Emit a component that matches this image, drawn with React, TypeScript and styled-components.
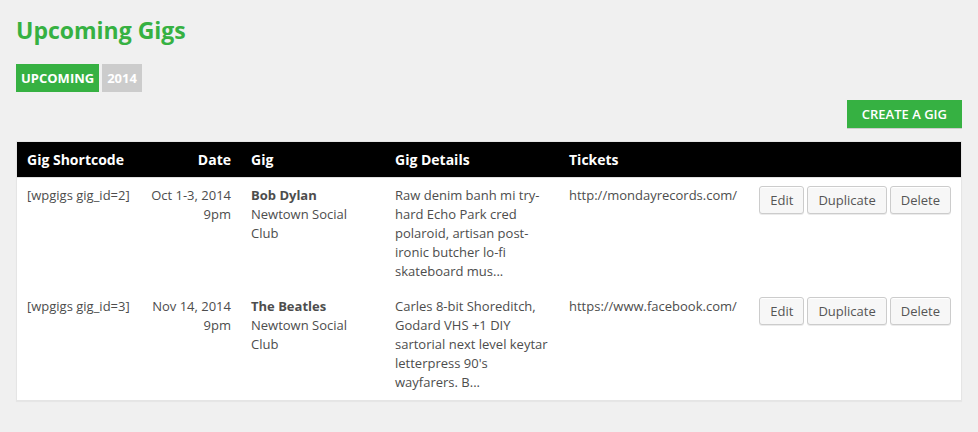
import React from "react";
import styled, { createGlobalStyle } from "styled-components";

const GlobalStyle = createGlobalStyle`
  body {
    margin: 0;
    background: #f0f0f0;
    color: #4d4d4d;
    font: 13px/19px "Open Sans", sans-serif;
  }
`;

const Page = styled.main`
  padding: 15px 16px 30px;
`;

const Title = styled.h1`
  margin: 0 0 19px;
  color: #36b142;
  font-size: 23px;
  line-height: 30px;
  font-weight: 700;
`;

const Filters = styled.nav`
  display: flex;
  gap: 3px;
`;

const FilterLink = styled.a<{ $active?: boolean }>`
  padding: 0 5px;
  background: ${(p) => (p.$active ? "#36b142" : "#ccc")};
  color: #fff;
  font-weight: 700;
  line-height: 28px;
  text-decoration: none;
  text-transform: uppercase;
`;

const Actions = styled.div`
  display: flex;
  justify-content: flex-end;
  margin: 8px 0 13px;
`;

const CreateButton = styled.button`
  height: 28px;
  padding: 0 15px;
  border: 0;
  background: #36b142;
  box-shadow: 0 1px 0 #ccc;
  color: #fff;
  font: 600 13px/28px "Open Sans", sans-serif;
  text-transform: uppercase;
`;

const GigTable = styled.table`
  width: 100%;
  table-layout: fixed;
  border: 1px solid #e5e5e5;
  border-spacing: 0;
  background: #fff;
  box-shadow: 0 1px 1px rgba(0, 0, 0, 0.04);
`;

const HeadCell = styled.th<{ $align?: "right" }>`
  padding: 8px 10px;
  border-bottom: 1px solid #e1e1e1;
  background: #000;
  color: #fff;
  font-size: 14px;
  font-weight: 700;
  text-align: ${(p) => p.$align ?? "left"};
`;

const Cell = styled.td<{ $align?: "right" }>`
  padding: 8px 10px;
  vertical-align: top;
  text-align: ${(p) => p.$align ?? "left"};
  white-space: ${(p) => (p.$align ? "nowrap" : "normal")};
`;

const ActionCell = styled(Cell)`
  white-space: nowrap;
`;

const GigName = styled.strong`
  display: block;
  font-weight: 700;
`;

const RowButtons = styled.div`
  display: flex;
  justify-content: flex-end;
  gap: 3px;
`;

const RowButton = styled.button`
  height: 28px;
  padding: 0 10px;
  border: 1px solid #ccc;
  border-radius: 3px;
  background: #f7f7f7;
  box-shadow: inset 0 1px 0 #fff, 0 1px 0 rgba(0, 0, 0, 0.08);
  color: #555;
  font: 13px/26px "Open Sans", sans-serif;
`;

const gigs = [
  {
    id: 2,
    date: "Oct 1-3, 2014",
    name: "Bob Dylan",
    details:
      "Raw denim banh mi try-hard Echo Park cred polaroid, artisan post-ironic butcher lo-fi skateboard mus...",
    tickets: "http://mondayrecords.com/",
  },
  {
    id: 3,
    date: "Nov 14, 2014",
    name: "The Beatles",
    details:
      "Carles 8-bit Shoreditch, Godard VHS +1 DIY sartorial next level keytar letterpress 90's wayfarers. B...",
    tickets: "https://www.facebook.com/",
  },
];

export default function App() {
  return (
    <>
      <GlobalStyle />
      <Page>
        <Title>Upcoming Gigs</Title>
        <Filters aria-label="Gig filters">
          <FilterLink href="#upcoming" $active>Upcoming</FilterLink>
          <FilterLink href="#2014">2014</FilterLink>
        </Filters>
        <Actions>
          <CreateButton type="button">Create a Gig</CreateButton>
        </Actions>
        <GigTable>
          <colgroup>
            <col width="124" />
            <col width="100" />
            <col width="144" />
            <col width="174" />
            <col width="188" />
            <col />
          </colgroup>
          <thead>
            <tr>
              <HeadCell scope="col">Gig Shortcode</HeadCell>
              <HeadCell scope="col" $align="right">Date</HeadCell>
              <HeadCell scope="col">Gig</HeadCell>
              <HeadCell scope="col">Gig Details</HeadCell>
              <HeadCell scope="col">Tickets</HeadCell>
              <HeadCell as="td" />
            </tr>
          </thead>
          <tbody>
            {gigs.map((gig) => (
              <tr key={gig.id}>
                <Cell>[wpgigs gig_id={gig.id}]</Cell>
                <Cell $align="right">
                  {gig.date}
                  <br />
                  9pm
                </Cell>
                <Cell>
                  <GigName>{gig.name}</GigName>
                  Newtown Social Club
                </Cell>
                <Cell>{gig.details}</Cell>
                <Cell>{gig.tickets}</Cell>
                <ActionCell>
                  <RowButtons>
                    <RowButton type="button">Edit</RowButton>
                    <RowButton type="button">Duplicate</RowButton>
                    <RowButton type="button">Delete</RowButton>
                  </RowButtons>
                </ActionCell>
              </tr>
            ))}
          </tbody>
        </GigTable>
      </Page>
    </>
  );
}
